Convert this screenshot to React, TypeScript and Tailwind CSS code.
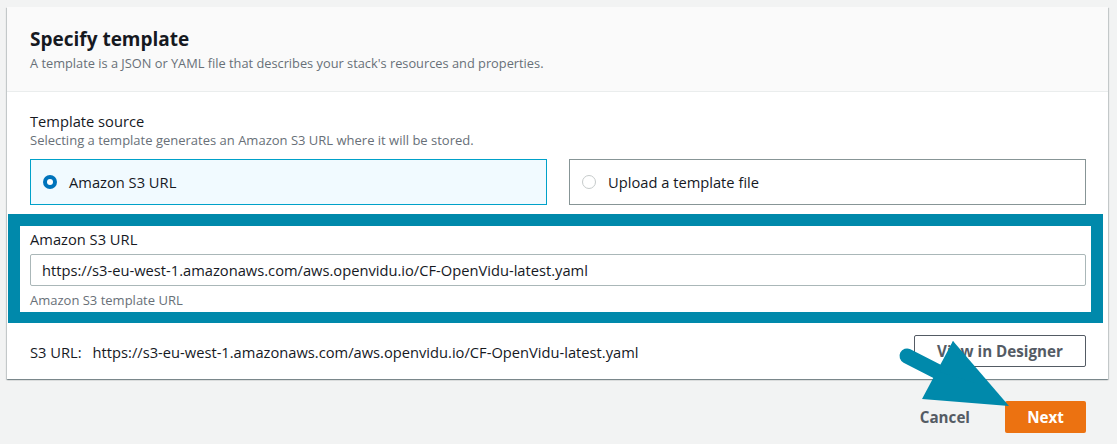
import React from 'react';

const url = 'https://s3-eu-west-1.amazonaws.com/aws.openvidu.io/CF-OpenVidu-latest.yaml';

function Radio({ checked }: { checked: boolean }) {
  return checked ? (
    <span className="flex h-[14px] w-[14px] items-center justify-center rounded-full bg-[#0073bb]">
      <span className="h-[6px] w-[6px] rounded-full bg-white" />
    </span>
  ) : (
    <span className="h-[14px] w-[14px] rounded-full border-[1.5px] border-[#c6cbcb] bg-white" />
  );
}

function Tile({ label, checked }: { label: string; checked: boolean }) {
  return (
    <div
      className={`flex h-[46px] items-center gap-[12px] border pl-[12px] ${
        checked ? 'border-[#00a1c9] bg-[#f1faff]' : 'border-[#879596] bg-white'
      }`}
    >
      <Radio checked={checked} />
      <span className="text-[14.7px] text-[#16191f]">{label}</span>
    </div>
  );
}

export default function App() {
  return (
    <div
      className="relative min-h-[444px] w-[1117px] bg-[#f2f3f3] pl-[7px] pr-[9px] pt-[7px]"
      style={{ fontFamily: '"Open Sans", Roboto, sans-serif' }}
    >
      <div className="bg-white shadow-[0_1px_1px_0_rgba(0,28,36,0.3),1px_1px_1px_0_rgba(0,28,36,0.15),-1px_1px_1px_0_rgba(0,28,36,0.15)]">
        <div className="border-b border-[#eaeded] bg-[#fafafa] pb-[19px] pl-[23px] pt-[20px]">
          <div className="text-[19px] font-bold leading-[24px] text-[#16191f]">Specify template</div>
          <div className="mt-[3px] text-[12.8px] leading-[18px] text-[#687078]">
            A template is a JSON or YAML file that describes your stack's resources and properties.
          </div>
        </div>

        <div className="pl-[23px] pr-[22px] pt-[19px]">
          <div className="text-[14.7px] leading-[20px] text-[#16191f]">Template source</div>
          <div className="text-[13px] leading-[18px] text-[#687078]">
            Selecting a template generates an Amazon S3 URL where it will be stored.
          </div>
          <div className="mt-[10px] grid grid-cols-2 gap-[22px]">
            <Tile label="Amazon S3 URL" checked />
            <Tile label="Upload a template file" checked={false} />
          </div>

          <div className="-ml-[22px] -mr-[17px] mt-[9px] border-[12px] border-b-[11px] border-[#0089ab]">
            <div className="bg-white pb-[4px] pl-[10px] pr-[5px] pt-[3px]">
              <div className="text-[14.7px] leading-[20px] text-[#16191f]">Amazon S3 URL</div>
              <div className="mt-[5px] flex h-[32px] items-center rounded-[2px] border border-[#aab7b8] px-[11px] text-[14.7px] text-[#16191f]">
                {url}
              </div>
              <div className="mt-[6px] text-[13px] leading-[16px] text-[#687078]">Amazon S3 template URL</div>
            </div>
          </div>

          <div className="flex items-center justify-between pb-[12px] pt-[12px]">
            <div className="pt-[2px] text-[14.7px] text-[#16191f]">
              <span>S3 URL:</span>
              <span className="ml-[11px]">{url}</span>
            </div>
            <button className="h-[32px] w-[172px] rounded-[2px] border border-[#545b64] bg-white text-[15.2px] font-bold text-[#545b64]">
              View in Designer
            </button>
          </div>
        </div>
      </div>

      <div className="mr-[22px] mt-[22px] flex items-center justify-end gap-[35px]">
        <button className="text-[15.2px] font-bold text-[#545b64]">Cancel</button>
        <button className="h-[32px] w-[81px] rounded-[2px] bg-[#ec7211] text-[15.2px] font-bold text-white">Next</button>
      </div>

      <svg className="pointer-events-none absolute left-0 top-0" width="1117" height="444" viewBox="0 0 1117 444">
        <line x1="907" y1="356" x2="950" y2="378" stroke="#0089ab" strokeWidth="15" strokeLinecap="round" />
        <polygon points="953,341 922,399 1009,406" fill="#0089ab" />
        <polygon points="953,341 975,383 940,372" fill="#0089ab" />
      </svg>
    </div>
  );
}
